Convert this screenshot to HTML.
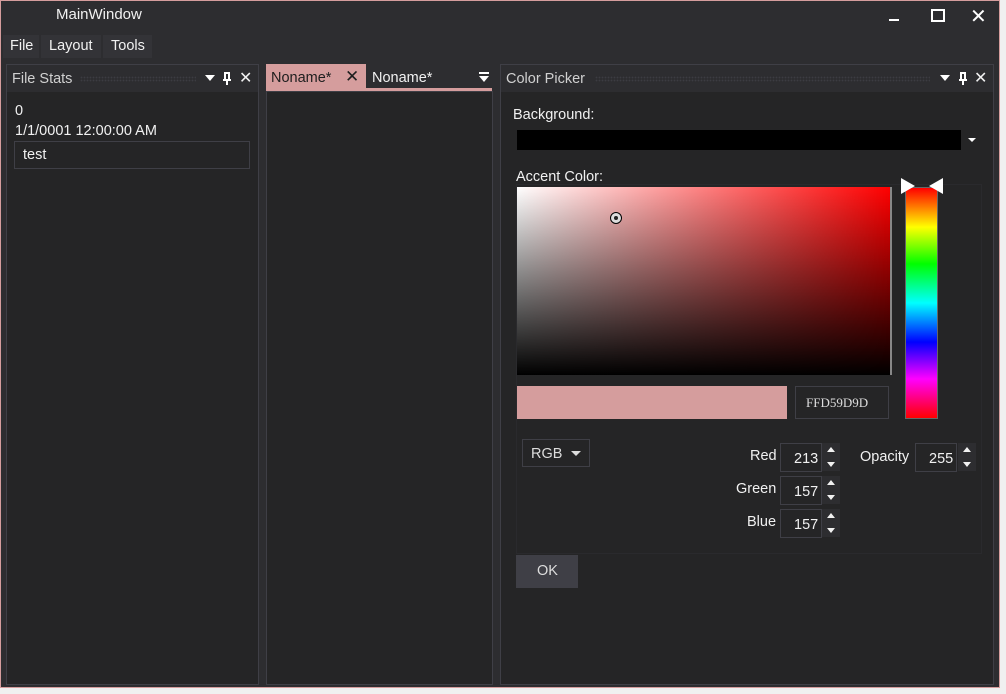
<!DOCTYPE html>
<html><head><style>
*{margin:0;padding:0;box-sizing:border-box}
body{width:1006px;height:694px;background:#f0f0f0;font-family:"Liberation Sans",sans-serif;font-size:14.5px;color:#f1f1f1;position:relative;overflow:hidden}
.a{position:absolute}
.win{left:0;top:0;width:1000px;height:688px;background:#2d2d30;border:1px solid #d59d9d}
.panel{background:#252526;border:1px solid #3f3f46}
.hdr{background:#2d2d30;height:27px}
.dots{background-image:radial-gradient(#3c3c42 0.7px,transparent 1px);background-size:3px 3px;height:6px}
.box{border:1px solid #3f3f46;background:#252526}
.spin{background:#2d2d30;width:18px;height:28px}
.up,.dn{position:absolute;left:5px;width:0;height:0;border-left:4px solid transparent;border-right:4px solid transparent}
.up{top:4px;border-bottom:5px solid #f1f1f1}
.dn{top:19px;border-top:5px solid #f1f1f1}
</style></head><body>
<div class="a win"></div>
<div class="a" style="left:56px;top:6px;font-size:15px">MainWindow</div>
<div class="a" style="left:889px;top:19px;width:10px;height:2px;background:#fff"></div>
<div class="a" style="left:931px;top:9px;width:14px;height:13px;border:2px solid #fff"></div>
<div class="a" style="left:970px;top:4px;font-size:20px;color:#fff">✕</div>
<div class="a" style="left:3px;top:35px;width:36px;height:23px;background:#333337"></div>
<div class="a" style="left:41px;top:35px;width:60px;height:23px;background:#333337"></div>
<div class="a" style="left:103px;top:35px;width:49px;height:23px;background:#333337"></div>
<div class="a" style="left:10px;top:38px">File</div>
<div class="a" style="left:49px;top:38px">Layout</div>
<div class="a" style="left:111px;top:38px">Tools</div>

<!-- left panel -->
<div class="a panel" style="left:6px;top:64px;width:253px;height:621px"></div>
<div class="a hdr" style="left:7px;top:65px;width:251px"></div>
<div class="a" style="left:12px;top:71px;color:#d0d0d0">File Stats</div>
<div class="a dots" style="left:80px;top:76px;width:116px"></div>
<div class="a" style="left:205px;top:75px;border-left:5px solid transparent;border-right:5px solid transparent;border-top:6px solid #fff"></div>
<svg class="a" style="left:222px;top:72px" width="10" height="14"><path d="M2 1h6M3 1v7M7 1v7M1 8h8M5 8v5" stroke="#fff" stroke-width="2" fill="none"/></svg>
<div class="a" style="left:239px;top:68px;font-size:16px">✕</div>
<div class="a" style="left:15px;top:103px">0</div>
<div class="a" style="left:15px;top:123px">1/1/0001 12:00:00 AM</div>
<div class="a box" style="left:14px;top:141px;width:236px;height:28px"></div>
<div class="a" style="left:23px;top:147px">test</div>

<!-- middle -->
<div class="a panel" style="left:266px;top:91px;width:227px;height:594px"></div>
<div class="a" style="left:266px;top:64px;width:100px;height:26px;background:#d59d9d"></div>
<div class="a" style="left:266px;top:88px;width:226px;height:3px;background:#d59d9d"></div>
<div class="a" style="left:271px;top:70px;color:#1e1e1e">Noname*</div>
<div class="a" style="left:345px;top:67px;color:#1e1e1e;font-size:17px">✕</div>
<div class="a" style="left:372px;top:70px">Noname*</div>
<div class="a" style="left:479px;top:72px;width:10px;height:2px;background:#fff"></div>
<div class="a" style="left:479px;top:76px;border-left:5px solid transparent;border-right:5px solid transparent;border-top:6px solid #fff"></div>

<!-- right -->
<div class="a panel" style="left:500px;top:64px;width:494px;height:621px"></div>
<div class="a hdr" style="left:501px;top:65px;width:492px"></div>
<div class="a" style="left:506px;top:71px;color:#d0d0d0">Color Picker</div>
<div class="a dots" style="left:595px;top:76px;width:335px"></div>
<div class="a" style="left:940px;top:75px;border-left:5px solid transparent;border-right:5px solid transparent;border-top:6px solid #fff"></div>
<svg class="a" style="left:958px;top:72px" width="10" height="14"><path d="M2 1h6M3 1v7M7 1v7M1 8h8M5 8v5" stroke="#fff" stroke-width="2" fill="none"/></svg>
<div class="a" style="left:974px;top:68px;font-size:16px">✕</div>
<div class="a" style="left:513px;top:107px">Background:</div>
<div class="a" style="left:517px;top:130px;width:444px;height:20px;background:#000"></div>
<div class="a" style="left:968px;top:138px;border-left:4px solid transparent;border-right:4px solid transparent;border-top:4px solid #fff"></div>
<div class="a" style="left:516px;top:169px">Accent Color:</div>
<div class="a" style="left:516px;top:184px;width:466px;height:370px;border:1px solid #2a2a2d"></div>
<div class="a" style="left:517px;top:187px;width:375px;height:188px;background:linear-gradient(to bottom,rgba(0,0,0,0),#000),linear-gradient(to right,#fff,#f00);border-right:2px solid #888"></div>
<div class="a" style="left:610px;top:212px;width:12px;height:12px;border-radius:50%;border:1.5px solid #000;background:#ddd"></div>
<div class="a" style="left:614px;top:216px;width:4px;height:4px;border-radius:50%;background:#222"></div>
<div class="a" style="left:905px;top:187px;width:33px;height:232px;border:1px solid #666;background:linear-gradient(to bottom,#f00,#ff0 17%,#0f0 33%,#0ff 50%,#00f 67%,#f0f 83%,#f00)"></div>
<div class="a" style="left:901px;top:178px;border-top:8px solid transparent;border-bottom:8px solid transparent;border-left:14px solid #fff"></div>
<div class="a" style="left:929px;top:178px;border-top:8px solid transparent;border-bottom:8px solid transparent;border-right:14px solid #fff"></div>
<div class="a" style="left:517px;top:386px;width:270px;height:33px;background:#d59d9d"></div>
<div class="a box" style="left:795px;top:386px;width:94px;height:33px"></div>
<div class="a" style="left:806px;top:395px;font-size:13px;color:#ddd;font-family:'Liberation Serif',serif">FFD59D9D</div>
<div class="a box" style="left:522px;top:439px;width:68px;height:28px"></div>
<div class="a" style="left:531px;top:446px;color:#ddd">RGB</div>
<div class="a" style="left:571px;top:451px;border-left:5px solid transparent;border-right:5px solid transparent;border-top:5px solid #ddd"></div>

<div class="a" style="left:750px;top:448px">Red</div>
<div class="a box" style="left:780px;top:443px;width:42px;height:29px"></div>
<div class="a" style="left:794px;top:451px">213</div>
<div class="a spin" style="left:822px;top:443px"><i class="up"></i><i class="dn"></i></div>
<div class="a" style="left:736px;top:481px">Green</div>
<div class="a box" style="left:780px;top:476px;width:42px;height:29px"></div>
<div class="a" style="left:794px;top:484px">157</div>
<div class="a spin" style="left:822px;top:476px"><i class="up"></i><i class="dn"></i></div>
<div class="a" style="left:747px;top:514px">Blue</div>
<div class="a box" style="left:780px;top:509px;width:42px;height:29px"></div>
<div class="a" style="left:794px;top:517px">157</div>
<div class="a spin" style="left:822px;top:509px"><i class="up"></i><i class="dn"></i></div>
<div class="a" style="left:860px;top:449px">Opacity</div>
<div class="a box" style="left:915px;top:443px;width:42px;height:29px"></div>
<div class="a" style="left:929px;top:451px">255</div>
<div class="a spin" style="left:958px;top:443px"><i class="up"></i><i class="dn"></i></div>
<div class="a" style="left:516px;top:555px;width:62px;height:33px;background:#3f3f46"></div>
<div class="a" style="left:537px;top:563px;color:#ddd">OK</div>
</body></html>
